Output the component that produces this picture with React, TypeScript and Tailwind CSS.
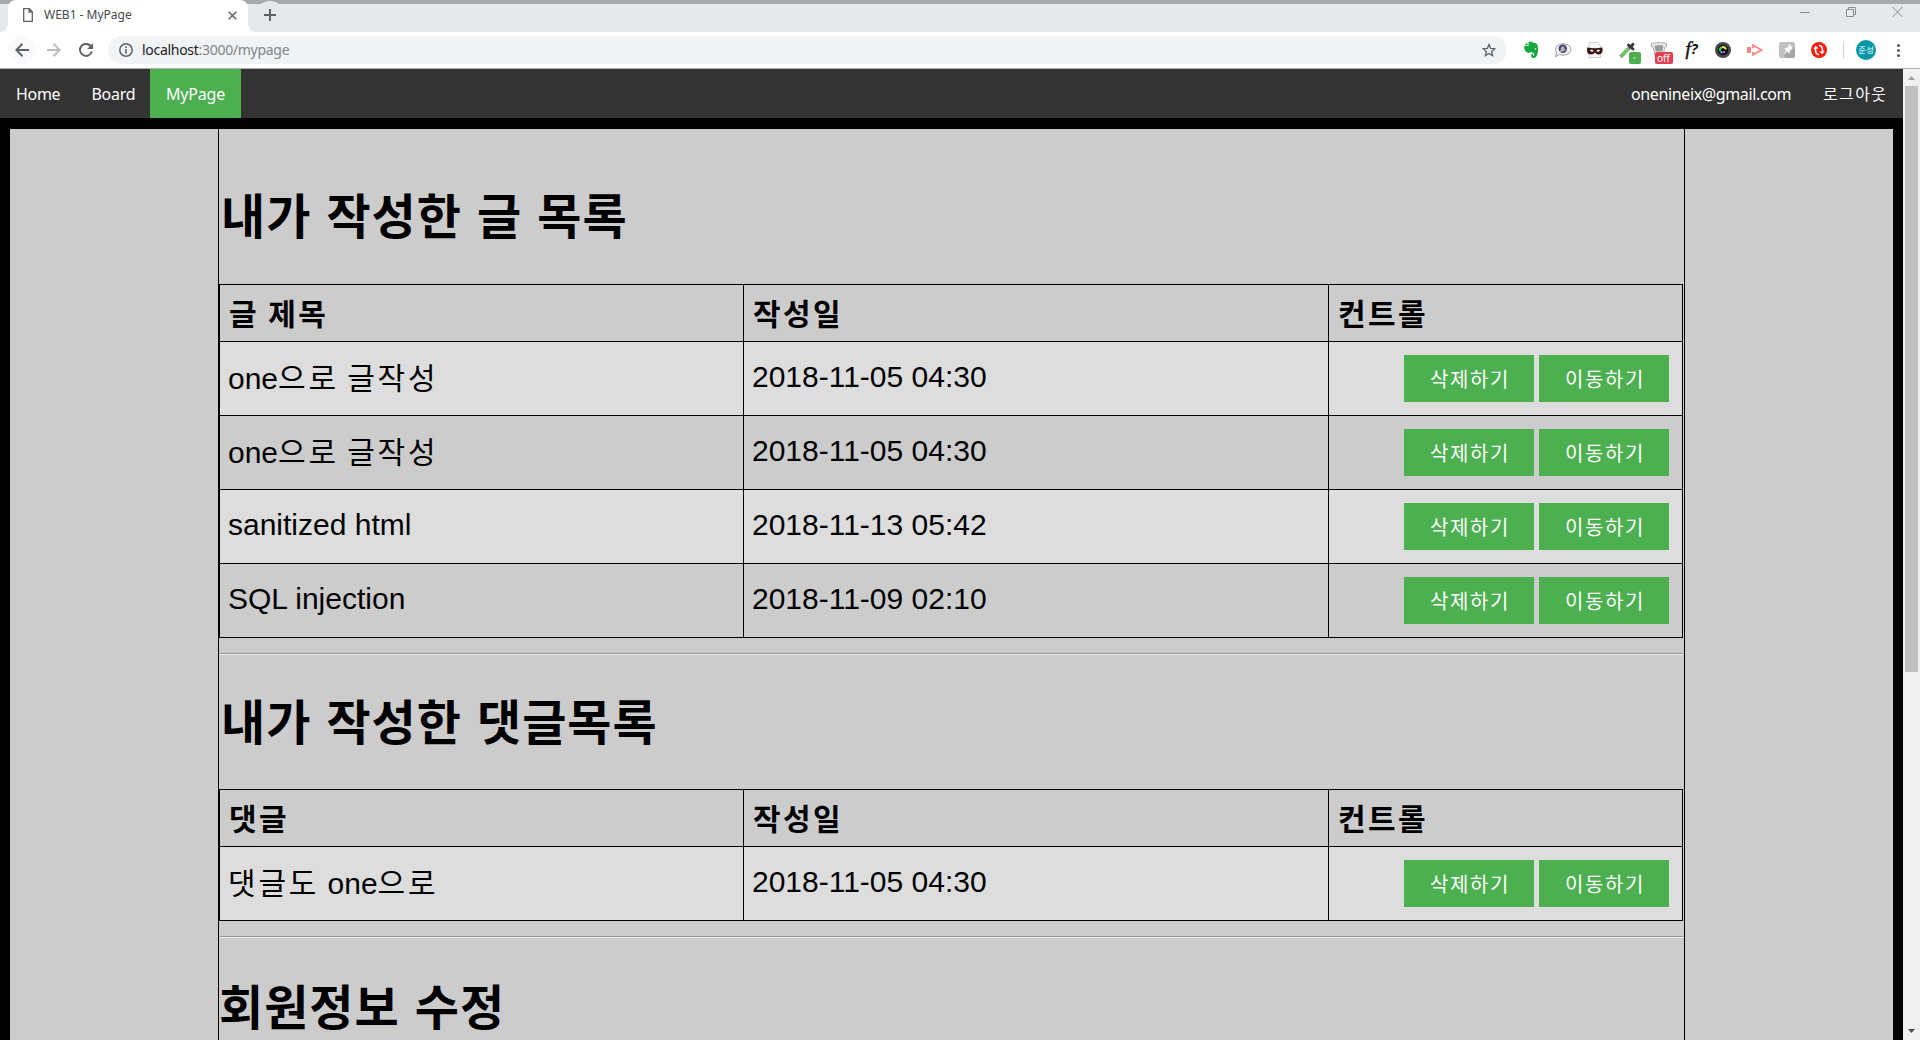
import React from "react";

const KR = "font-['Noto_Sans_CJK_KR',sans-serif]";

function Btn({ children }: { children: string }) {
  return (
    <button className="h-[47px] w-[130px] bg-[#4CAF50] pl-[2px] text-[20px] leading-[47px] tracking-[1.6px] text-white">
      {children}
    </button>
  );
}

/* Hangul runs get wider tracking than Latin runs. */
function Mixed({ text }: { text: string }) {
  return (
    <>
      {text.split(/([\uac00-\ud7a3]+)/).map((part, i) =>
        i % 2 ? <span key={i} className="tracking-[2.8px]">{part}</span> : <span key={i}>{part}</span>
      )}
    </>
  );
}

type Row = { title: string; date: string };

function Table({ head, rows }: { head: string; rows: Row[] }) {
  const cols = "grid grid-cols-[523px_584px_353px] gap-px pr-px";
  return (
    <div className="w-[1464px] border-t border-l border-black">
      <div className={cols + " h-[57px] bg-black pb-px text-[30px] font-bold leading-[54px] tracking-[2.4px]"}>
        <div className="bg-[#ccc] pl-[9px]">{head}</div>
        <div className="bg-[#ccc] pl-[9px]">작성일</div>
        <div className="bg-[#ccc] pl-[9px]">컨트롤</div>
      </div>
      {rows.map((r, i) => {
        const bg = i % 2 === 0 ? "bg-[#ddd]" : "bg-[#ccc]";
        const lead = /[\uac00-\ud7a3]/.test(r.title) ? " leading-[74px]" : " leading-[70px]";
        return (
          <div key={i} className={cols + " h-[74px] bg-black pb-px"}>
            <div className={bg + lead + " h-[73px] pl-[8px] text-[30px] font-['Liberation_Sans','Noto_Sans_CJK_KR',sans-serif]"}><Mixed text={r.title} /></div>
            <div className={bg + " pl-[8px] text-[30px] leading-[70px] font-['Liberation_Sans',sans-serif]"}>{r.date}</div>
            <div className={bg + " flex h-[73px] items-center justify-end gap-[5px] pr-[13px]"}>
              <Btn>삭제하기</Btn>
              <Btn>이동하기</Btn>
            </div>
          </div>
        );
      })}
    </div>
  );
}

function Hr() {
  return <div className="mt-[15px] h-[2px] border-t border-b border-t-[#999] border-b-[#eee]" />;
}

const st = { fill: "none", stroke: "#5f6368", strokeWidth: 2 };

function Chrome() {
  return (
    <div className="h-[69px] shrink-0 font-['Noto_Sans',sans-serif]">
      <div className="flex h-[32px] border-t-4 border-[#a9a9a9] bg-[#e5e9ec]">
        <div className="h-[28px] w-[8px] bg-white">
          <div className="h-full rounded-br-[8px] bg-[#e5e9ec]" />
        </div>
        <div className="relative z-10 -mt-1 flex h-[32px] w-[240px] items-center rounded-t-[8px] bg-white pl-[15px]">
          <svg width="10" height="14" viewBox="0 0 10 14" className="-mt-[2px]"><path d="M.7.7h5.6l3 3v9.6H.7zM6 .7V4h3.3" fill="none" stroke="#5f6368" strokeWidth="1.3" /></svg>
          <span className="-mt-[3px] ml-[11px] w-[184px] text-[12px] text-[#45494d]">WEB1 - MyPage</span>
          <svg width="9" height="9" viewBox="0 0 9 9" className="-mt-[2px]"><path d="M.7.7l7.6 7.6M8.3.7L.7 8.3" fill="none" stroke="#5f6368" strokeWidth="1.5" /></svg>
        </div>
        <div className="h-[28px] w-[8px] bg-white"><div className="h-full rounded-bl-[8px] bg-[#e5e9ec]" /></div>
        <div className="relative -mt-[3px] h-[28px] w-[28px] rounded-full bg-[#e5e9ec]">
          <svg width="12" height="12" viewBox="0 0 12 12" className="absolute left-[8px] top-[8px]"><path d="M6 0v12M0 6h12" {...st} /></svg>
        </div>
        <svg width="104" height="12" viewBox="0 0 104 12" className="ml-auto mr-[17px] mt-[2px]" fill="none" stroke="#8a8d90" strokeWidth="1">
          <path d="M1 6.500h10M47.500 3.500h7v7h-7zM49.500 3.500v-2h7v7h-2M93.500 1l10 10M103.500 1l-10 10" />
        </svg>
      </div>
      <div className="flex h-[36px] items-center bg-white">
        <div className="ml-[8px] flex h-[28px] w-[28px] items-center justify-center rounded-full bg-[#fafafa]">
          <svg width="14" height="14" viewBox="0 0 14 14"><path d="M14 7H1.500M7.500.8L1.300 7l6.200 6.200" {...st} /></svg>
        </div>
        <svg width="14" height="14" viewBox="0 0 14 14" className="ml-[11px]"><path d="M0 7h12.500M6.500.8L12.700 7l-6.200 6.200" fill="none" stroke="#bbbdbf" strokeWidth="2" /></svg>
        <svg width="14" height="14" viewBox="0 0 14 14" className="ml-[18px]"><path d="M11.600 3A6 6 0 1 0 12.800 8.500" {...st} /><path d="M14 0v6H8z" fill="#5f6368" /></svg>
        <div className="ml-[15px] flex h-[28px] w-[1399px] items-center rounded-full bg-[#f1f3f4] pl-[11px]">
          <svg width="14" height="14" viewBox="0 0 14 14"><circle cx="7" cy="7" r="6.200" fill="none" stroke="#5f6368" strokeWidth="1.500" /><path d="M7 6v4.500M7 3.300v1.600" stroke="#5f6368" strokeWidth="1.600" /></svg>
          <span className="-mt-px ml-[9px] text-[14px] tracking-[-0.29px] text-[#202124]">localhost<span className="text-[#80868b]">:3000/mypage</span></span>
          <svg width="14" height="14" viewBox="0 0 24 24" className="ml-auto mr-[11px]"><path d="M12 2.500l2.800 6.700 7.200.6-5.500 4.700 1.700 7L12 17.800 5.800 21.500l1.700-7L2 9.800l7.200-.6z" fill="none" stroke="#5f6368" strokeWidth="2.200" /></svg>
        </div>
        <svg width="413" height="36" viewBox="1507 32 413 36">
          <path d="M1528.500 42.300c1.500-.8 4-.5 5 .7 3.500 0 4.500 1.500 4.500 6 0 5.500-1.500 9-4.200 9-3.200 0-3.600-4-.8-4.300v2c1.300.5 2-2.200.2-2.700-1.700-.4-1.900-1.200-2.400-1.200-1.700 2.700-6.500.5-6.600-4.800 0-.7.300-1 1-1h3.300zM1524.500 45.200l3-2.700v2.200q0 .5-.5.500z" fill="#12a83b" />
          <circle cx="1535.500" cy="49" r=".8" fill="#fff" />
          <path d="M1556.800 52.500l-1.400 4.200 4.200-2.200a7.600 5.700 0 1 0-2.800-2z" fill="#f4f4f4" stroke="#999" strokeWidth="1" />
          <circle cx="1562.800" cy="48.800" r="4.200" fill="#35487c" /><path d="M1561.500 46.500h2.500l1.500 4.500-1.500-.5-2 1.500-2-.5z" fill="#c9a9a0" />
          <path d="M1589 42.500h8.500l3 3V57.500h-11.500z" fill="#f6f6f6" stroke="#c4c4c4" strokeWidth=".8" />
          <path d="M1587.200 47.500q8 1.500 15.300 0v4q-1 3-4 3-2 0-3.500-2-1.500 2-3.500 2-4 0-4.500-3z" fill="#3b1514" /><path d="M1589.800 50.200l2.200-.6 1.600 1.400-1.600 1zM1600.200 50.200l-2.200-.6-1.600 1.400 1.600 1z" fill="#fff" />
          <path d="M1620.500 57l9-9.500" stroke="#999" strokeWidth="3.800" /><path d="M1621.300 56.200l7-7.400" stroke="#5fd050" strokeWidth="2.600" /><path d="M1628.500 45l4.500 4M1630.300 47.200l2.700-2.900" stroke="#3a3a3a" strokeWidth="3" strokeLinecap="round" />
          <rect x="1629" y="52" width="12" height="12" rx="2" fill="#4caf50" /><path d="M1633.500 58h2" stroke="#fff" />
          <path d="M1651.500 43.500q7.500-2 15 0v3h-1.500l-2 9h-8l-2-9h-1.500z" fill="#f0f0f0" stroke="#aaa" strokeWidth="1" /><path d="M1654.500 45.500q4.500-1 9 0l-1.200 6h-6.600z" fill="#9a9a9a" />
          <rect x="1655" y="52" width="18" height="12" rx="2" fill="#e53e50" />
          <text x="1657" y="61.500" fontSize="10" fill="#fff" fontFamily="Noto Sans">off</text>
          <text x="1685.500" y="54.500" fontSize="19" fontStyle="italic" fill="#111" stroke="#111" strokeWidth=".5" fontFamily="Liberation Serif">f</text>
          <text x="1691" y="54" fontSize="14.500" fontStyle="italic" fontWeight="bold" fill="#111" fontFamily="Open Sans">?</text>
          <circle cx="1723" cy="50" r="8" fill="#45484d" /><circle cx="1723" cy="50" r="5.200" fill="#0a0a0a" />
          <path d="M1720 51a3.200 3.200 0 0 1 2-3.700" stroke="#2d6" strokeWidth="2" fill="none" /><path d="M1722 47.300a3.200 3.200 0 0 1 4 2" stroke="#ee4" strokeWidth="2" fill="none" /><path d="M1723 51.500l2 1" stroke="#e4d" strokeWidth="2" /><path d="M1720.500 51.500l2 1.500" stroke="#3bf" strokeWidth="2" />
          <path d="M1747 47h4v6h-4z" fill="#ff8585" /><path d="M1753 45.200v9.600l8.500-4.800z" fill="none" stroke="#ff8585" strokeWidth="1.800" /><circle cx="1753" cy="50" r="2" fill="#fff" />
          <path d="M1779 44.500q0-2.500 2.500-2.500h11q2.500 0 2.500 2.500v11q0 2.500-2.500 2.500h-11q-2.500 0-2.500-2.500z" fill="#c0c0c0" /><path d="M1783 55l10-8 2 2v6.500q0 2.500-2.500 2.500h-6.500z" fill="#a6a6a6" />
          <path d="M1788.800 43.800l4.400 4.400-1.200.6-2 2.200-.4 2.800-2.200-2.300-4.400 3.900 3.400-4.900-2.200-2.200 2.800-.4 1.700-2.200z" fill="#fff" />
          <circle cx="1819" cy="50" r="8" fill="#fb1b0c" />
          <path d="M1819 54.700q-3.500-.7-3.500-4.700v-2M1819 45.300q3.500.7 3.500 4.700v2" stroke="#fff" strokeWidth="1.600" fill="none" />
          <path d="M1813.300 49l2.300-3.300 3.200 2.800zM1824.700 51l-2.300 3.300-3.200-2.800z" fill="#fff" />
          <path d="M1843.500 42v16" stroke="#d0d0d0" />
          <circle cx="1866" cy="50" r="10" fill="#0097a7" />
          <text x="1866" y="53.300" fontSize="8.500" textAnchor="middle" fill="#fff" fontFamily="Noto Sans CJK KR">준성</text>
          <circle cx="1898.500" cy="45.500" r="1.600" fill="#5f6368" /><circle cx="1898.500" cy="50.500" r="1.600" fill="#5f6368" /><circle cx="1898.500" cy="55.500" r="1.600" fill="#5f6368" />
        </svg>
      </div>
      <div className="h-px bg-[#b0b0b0]" />
    </div>
  );
}

const h1 = "text-[48px] font-bold tracking-[1px] [word-spacing:3.2px]";

export default function App() {
  return (
    <div className="flex h-[1040px] w-[1920px] flex-col overflow-hidden bg-white text-black">
      <Chrome />
      <div className="flex min-h-0 flex-1">
        <div className={"flex w-[1903px] flex-col bg-black " + KR}>
          <nav className="flex h-[49px] shrink-0 bg-[#333] text-[16px] leading-[51px] tracking-[-0.3px] text-white font-['Noto_Sans','Noto_Sans_CJK_KR',sans-serif]">
            <div className="w-[76px] pl-[16px]">Home</div>
            <div className="w-[74px] pl-[15.500px]">Board</div>
            <div className="w-[91px] bg-[#4CAF50] pl-[16px] tracking-[-0.2px]">MyPage</div>
            <div className="ml-auto w-[192px] pl-[16px] tracking-[-0.37px]">onenineix@gmail.com</div>
            <div className="w-[96px] whitespace-nowrap pl-[16px] tracking-[1.4px]">로그아웃</div>
          </nav>
          <div className="mx-[10px] mt-[11px] min-h-0 flex-1 overflow-hidden bg-[#ccc]">
            <main className="ml-[208px] h-full w-[1467px] whitespace-nowrap border-x border-black">
              <h1 className={h1 + " h-[155px] pl-[2px] pt-[50px] leading-[69px]"}>내가 작성한 글 목록</h1>
              <Table head="글 제목" rows={[
                { title: "one으로 글작성", date: "2018-11-05 04:30" },
                { title: "one으로 글작성", date: "2018-11-05 04:30" },
                { title: "sanitized html", date: "2018-11-13 05:42" },
                { title: "SQL injection", date: "2018-11-09 02:10" },
              ]} />
              <Hr />
              <h1 className={h1 + " h-[134px] pl-[2px] pt-[30px] leading-[69px]"}>내가 작성한 댓글목록</h1>
              <Table head="댓글" rows={[{ title: "댓글도 one으로", date: "2018-11-05 04:30" }]} />
              <Hr />
              <h1 className={h1 + " pt-[42px] leading-[48px]"}>회원정보 수정</h1>
            </main>
          </div>
        </div>
        <div className="flex w-[17px] flex-col items-center justify-between bg-[#f1f1f1]">
          <div>
            <svg width="17" height="17" viewBox="0 0 17 17"><path d="M5 11l3.500-4 3.500 4z" fill="#a3a3a3" /></svg>
            <div className="mx-auto h-[586px] w-[13px] bg-[#c1c1c1]" />
          </div>
          <svg width="17" height="17" viewBox="0 0 17 17"><path d="M5 6h7l-3.500 4z" fill="#505050" /></svg>
        </div>
      </div>
    </div>
  );
}
